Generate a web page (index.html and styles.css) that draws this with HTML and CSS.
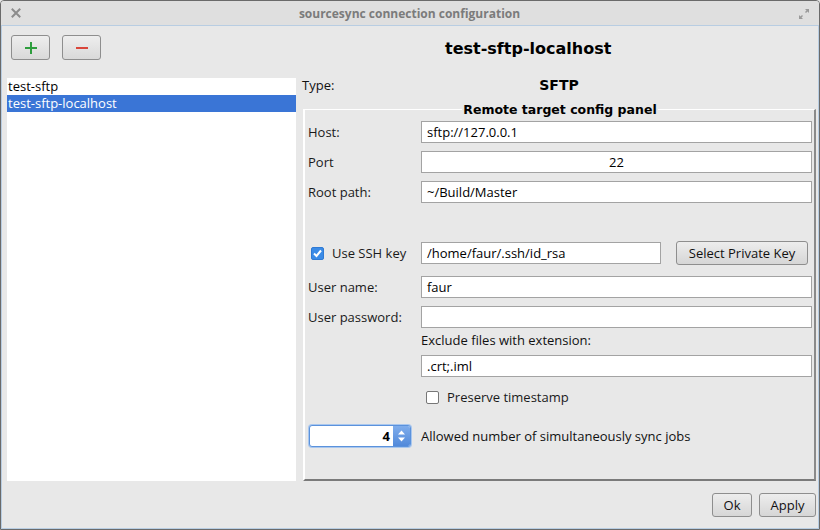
FILE: index.html
```html
<!DOCTYPE html>
<html>
<head>
<meta charset="utf-8">
<link rel="stylesheet" href="styles.css">
</head>
<body>
<div class="window">
  <div class="titlebar">
    <svg class="close" width="10" height="10" viewBox="0 0 10 10"><path d="M1.5 1.5 L8.5 8.5 M8.5 1.5 L1.5 8.5" stroke="#8c8c8c" stroke-width="2" stroke-linecap="square"/></svg>
    <span class="title">sourcesync connection configuration</span>
    <svg class="max" width="12" height="12" viewBox="0 0 12 12"><polygon points="7,1 11,1 11,5" fill="#9a9a9a"/><path d="M10 2 L7.5 4.5" stroke="#9a9a9a" stroke-width="1.5"/><polygon points="1,11 1,7 5,11" fill="#9a9a9a"/><path d="M2 10 L4.5 7.5" stroke="#9a9a9a" stroke-width="1.5"/></svg>
  </div>
  <div class="client">
    <div class="main">
      <div class="toolbar">
        <button class="tbtn" title="Add"><svg width="14" height="14" viewBox="0 0 14 14"><path d="M7 1 V13 M1 7 H13" stroke="#2e9e3e" stroke-width="2"/></svg></button>
        <button class="tbtn minus" title="Remove"><svg width="14" height="14" viewBox="0 0 14 14"><path d="M1 7 H13" stroke="#d9463b" stroke-width="2"/></svg></button>
      </div>
      <div class="heading">test-sftp-localhost</div>
      <ul class="list">
        <li>test-sftp</li>
        <li class="selected">test-sftp-localhost</li>
      </ul>
      <div class="details">
        <div class="type-row"><span class="type-label">Type:</span><span class="type-val">SFTP</span></div>
        <fieldset class="group">
          <legend>Remote target config panel</legend>
          <div class="row"><label>Host:</label><div class="field">sftp://127.0.0.1</div></div>
          <div class="row"><label>Port</label><div class="field center">22</div></div>
          <div class="row"><label>Root path:</label><div class="field">~/Build/Master</div></div>
          <div class="row ssh">
            <label class="check"><span class="cb checked"><svg width="11" height="11" viewBox="0 0 11 11"><path d="M2 5.5 L4.5 8 L9 2.5" stroke="#fff" stroke-width="2" fill="none"/></svg></span>Use SSH key</label>
            <div class="field keypath">/home/faur/.ssh/id_rsa</div>
            <button class="btn keybtn">Select Private Key</button>
          </div>
          <div class="row user"><label>User name:</label><div class="field">faur</div></div>
          <div class="row"><label>User password:</label><div class="field"></div></div>
          <div class="row exclude-label"><span></span><span>Exclude files with extension:</span></div>
          <div class="row exclude"><span></span><div class="field">.crt;.iml</div></div>
          <div class="row preserve"><span></span><label class="check"><span class="cb"></span>Preserve timestamp</label></div>
          <div class="row jobs">
            <div class="spin"><span class="spin-val">4</span><span class="spin-btn"><svg width="9" height="14" viewBox="0 0 9 14"><polygon points="4.5,1.5 8,5.5 1,5.5" fill="#fff"/><polygon points="4.5,12.5 8,8.5 1,8.5" fill="#fff"/></svg></span></div>
            <span>Allowed number of simultaneously sync jobs</span>
          </div>
        </fieldset>
      </div>
    </div>
    <div class="footer">
      <button class="btn ok">Ok</button>
      <button class="btn apply">Apply</button>
    </div>
  </div>
</div>
</body>
</html>
```
FILE: styles.css
```css
* { box-sizing: border-box; }
html, body { margin: 0; padding: 0; }
body {
  width: 820px;
  height: 530px;
  background: #e8e8e8;
  font-family: "Open Sans", "DejaVu Sans", sans-serif;
  font-size: 13px;
  color: #111;
}
.window {
  width: 820px;
  height: 530px;
  border: 1px solid #6a6a6a;
  border-radius: 4px 4px 0 0;
  display: flex;
  flex-direction: column;
  background: #e8e8e8;
  overflow: hidden;
}
.titlebar {
  height: 25px;
  flex: none;
  background: #dfdfdf;
  border-bottom: 1px solid #b8cde2;
  display: flex;
  align-items: center;
  padding: 0 9px;
}
.close { flex: none; margin-left: 1px; }
.title {
  flex: 1;
  text-align: center;
  font-weight: bold;
  font-size: 12px;
  color: #7b7b7b;
}
.max { flex: none; margin-top: 1px; }
.client {
  flex: 1;
  display: flex;
  flex-direction: column;
  border: 1px solid #b8cde2;
  border-top: none;
}
.main {
  flex: 1;
  display: grid;
  grid-template-columns: 289px 1fr;
  grid-template-rows: 52px 1fr;
  column-gap: 6px;
  padding: 0 2px 0 5px;
}
.toolbar {
  padding: 9px 0 0 4px;
  display: flex;
  gap: 12px;
  align-items: flex-start;
}
.tbtn {
  width: 39px;
  height: 25px;
  border: 1px solid #8e8e8e;
  border-radius: 3px;
  background: linear-gradient(#eeeeee, #d9d9d9);
  display: flex;
  align-items: center;
  justify-content: center;
  padding: 0;
}
.heading {
  font-family: "DejaVu Sans", sans-serif;
  font-weight: bold;
  font-size: 16px;
  padding: 13px 0 0 143px;
  color: #000;
}
.list {
  list-style: none;
  margin: 0;
  padding: 0;
  background: #fff;
  font-size: 13px;
  color: #000;
}
.list li {
  height: 17px;
  line-height: 17px;
  padding-left: 1px;
}
.list li.selected {
  background: #3a75d6;
  color: #fff;
}
.details {
  display: flex;
  flex-direction: column;
}
.type-row {
  display: grid;
  grid-template-columns: 1fr 1fr 1fr;
  height: 23px;
  line-height: 15px;
}
.type-val {
  font-family: "DejaVu Sans", sans-serif;
  font-weight: bold;
  font-size: 14px;
  text-align: center;
  color: #000;
}
.group {
  flex: 1;
  margin: 0 0 0 1px;
  padding: 3px 2px 0 3px;
  border-top: 1px solid #fff;
  border-left: 2px solid #fff;
  border-right: 2px solid #8a8a8a;
  border-bottom: 2px solid #7a7a7a;
  min-width: 0;
}
.group legend {
  margin: 0 auto;
  padding: 0 1px;
  font-family: "DejaVu Sans", sans-serif;
  font-weight: bold;
  font-size: 12.5px;
  line-height: 17px;
  color: #000;
}
.row {
  display: grid;
  grid-template-columns: 113px 1fr;
  align-items: center;
  margin-top: 8px;
}
.row:first-of-type { margin-top: 0; }
.row label { color: #1a1a1a; }
.field {
  height: 22px;
  background: #fff;
  border: 1px solid #a3a3a3;
  padding: 0 5px;
  line-height: 20px;
  color: #000;
  white-space: nowrap;
  overflow: hidden;
}
.field.center { text-align: center; }
.ssh {
  margin-top: 38px;
  grid-template-columns: 113px 240px 1fr;
}
.ssh .keybtn { margin-left: 15px; width: 132px; }
.check {
  display: flex;
  align-items: center;
  gap: 8px;
}
.ssh .check { padding-left: 3px; }
.cb {
  width: 13px;
  height: 13px;
  border: 1px solid #777;
  border-radius: 2px;
  background: #fff;
  display: inline-flex;
  align-items: center;
  justify-content: center;
  flex: none;
}
.cb.checked {
  background: #3b8be6;
  border-color: #2f7ad4;
}
.btn {
  height: 24px;
  border: 1px solid #8e8e8e;
  border-radius: 3px;
  background: linear-gradient(#ededed, #d6d6d6);
  font-family: "Open Sans", "DejaVu Sans", sans-serif;
  font-size: 13px;
  color: #111;
  padding: 0;
  white-space: nowrap;
}
.user { margin-top: 11px; }
.exclude-label { margin-top: 3px; height: 18px; }
.exclude { margin-top: 6px; }
.preserve { margin-top: 11px; }
.preserve .check { padding-left: 5px; }
.jobs {
  margin-top: 19px;
}
.spin {
  width: 102px;
  height: 22px;
  margin-left: 1px;
  border: 1px solid #5b92dc;
  border-radius: 3px;
  box-shadow: 0 0 0 1px #a9c7ee;
  background: #fff;
  display: flex;
  overflow: hidden;
}
.spin-val {
  flex: 1;
  text-align: right;
  font-weight: bold;
  line-height: 20px;
  padding-right: 3px;
  color: #000;
}
.spin-btn {
  width: 17px;
  background: linear-gradient(#7fadec, #5189da);
  display: flex;
  align-items: center;
  justify-content: center;
}
.footer {
  flex: none;
  display: flex;
  justify-content: flex-end;
  gap: 7px;
  padding: 12px 2px 11px 0;
}
.ok { width: 40px; }
.apply { width: 57px; }
```
